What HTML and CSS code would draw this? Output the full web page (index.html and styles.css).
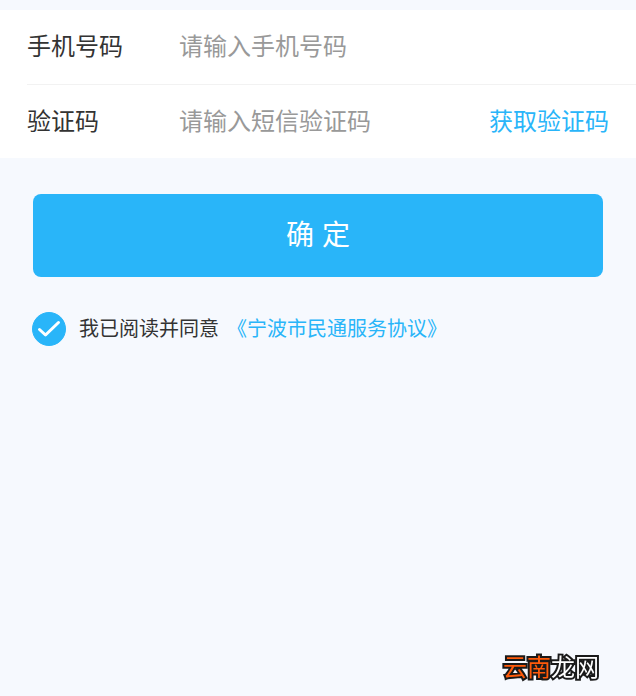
FILE: index.html
```
<!DOCTYPE html>
<html lang="zh-CN">
<head>
	<meta charset="utf-8" />
	<meta name="viewport" content="width=device-width, initial-scale=1" />
	<title>宁波市民通</title>
	<link rel="stylesheet" href="styles.css">
</head>
<body>
	<form class="login">
		<!-- 手机号和验证码 -->
		<div class="fields">
			<div class="row">
				<label class="name" for="phone">手机号码</label>
				<input class="text" id="phone" name="phone" type="tel" placeholder="请输入手机号码" />
			</div>
			<div class="row">
				<label class="name" for="code">验证码</label>
				<input class="text" id="code" name="code" type="text" placeholder="请输入短信验证码" />
				<button class="get-code" type="button">获取验证码</button>
			</div>
		</div>
		<button class="submit" type="button">确 定</button>
		<!-- 服务协议 -->
		<div class="agree">
			<span class="check">
				<input class="check-box" id="agree" name="agree" type="checkbox" checked />
				<svg class="check-mark" viewBox="0 0 34 34" aria-hidden="true">
					<path d="M7.5 17.5 L13.5 23 L26.5 10.5" />
				</svg>
			</span>
			<label for="agree">我已阅读并同意</label>
			<a class="link" href="#">《宁波市民通服务协议》</a>
		</div>
	</form>
	<div class="mark"><span class="mark-hot">云南</span>龙网</div>
</body>
</html>
```

FILE: styles.css
```
* {
	box-sizing: border-box;
}

body {
	margin: 0;
	background-color: #f6f9fe;
	color: #333;
	font-family: "Liberation Sans", "Noto Sans CJK SC", sans-serif;
	font-size: 24px;
	line-height: 1.5;
}

input, button {
	margin: 0;
	padding: 0;
	border: none;
	background: none;
	font: inherit;
}

button {
	cursor: pointer;
}

/* 输入区域 */
.fields {
	margin-top: 10px;
	padding-left: 27px;
	background-color: #fff;
}

.row {
	display: flex;
	align-items: center;
	height: 74px;
	padding-right: 27px;
}

.row + .row {
	border-top: 1px solid #f2f2f2;
}

.name {
	flex: none;
	width: 152px;
}

.text {
	flex: 1;
	min-width: 0;
	height: 48px;
	color: #333;
	outline: none;
}

.text::placeholder {
	color: #999;
	opacity: 1;
}

.get-code {
	flex: none;
	color: #29b5f9;
}

/* 确定按钮 */
.submit {
	display: block;
	width: calc(100% - 66px);
	height: 83px;
	margin: 36px auto 0;
	border-radius: 8px;
	background-color: #29b5f9;
	color: #fff;
	font-size: 28px;
}

/* 协议 */
.agree {
	display: flex;
	align-items: center;
	margin: 35px 32px 0;
	font-size: 20px;
}

.check {
	display: grid;
	flex: none;
	width: 34px;
	height: 34px;
	margin-right: 13px;
}

.check-box, .check-mark {
	grid-area: 1 / 1;
	width: 34px;
	height: 34px;
}

.check-box {
	appearance: none;
	border: 1px solid #29b5f9;
	border-radius: 50%;
	cursor: pointer;
}

.check-box:checked {
	background-color: #29b5f9;
}

.check-mark {
	fill: none;
	stroke: #fff;
	stroke-width: 3;
	stroke-linecap: round;
	stroke-linejoin: round;
	pointer-events: none;
}

.link {
	margin-left: 8px;
	color: #29b5f9;
	text-decoration: none;
}

/* 右下角水印 */
.mark {
	position: fixed;
	right: 37px;
	bottom: 10px;
	color: #fff;
	line-height: 36px;
	-webkit-text-stroke: 4px #1a1a1a;
	paint-order: stroke fill;
}

.mark-hot {
	color: #ff5a0a;
}
```
